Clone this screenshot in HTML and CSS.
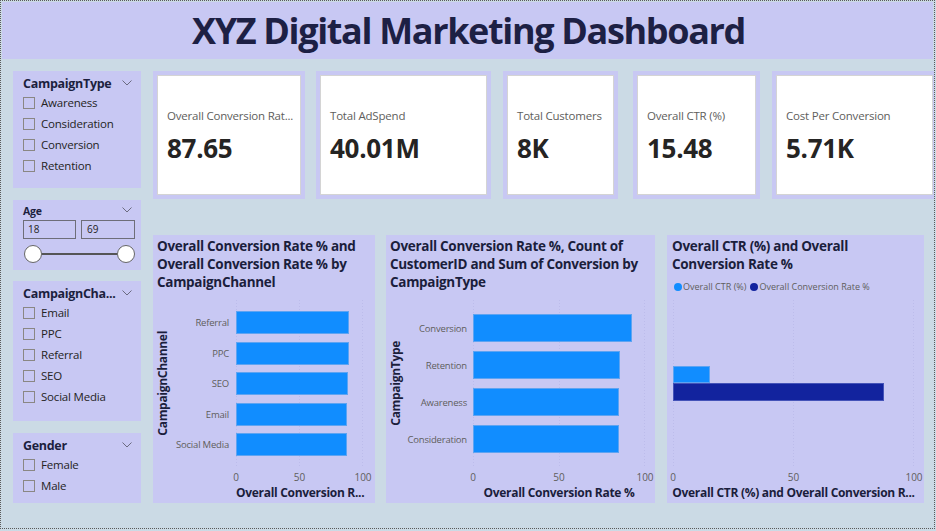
FILE: index.html
```html
<!DOCTYPE html>
<html lang="en">
<head>
<meta charset="utf-8">
<title>XYZ Digital Marketing Dashboard</title>
<link rel="stylesheet" href="styles.css">
</head>
<body>
<div class="frame">
  <header class="banner"><h1>XYZ Digital Marketing Dashboard</h1></header>
  <main class="main">
    <aside class="filters">
      <section class="slicer s-type">
        <div class="slicer-head"><span>CampaignType</span><svg class="chev" width="10" height="6" viewBox="0 0 10 6"><polyline points="0.5,0.5 5,5 9.5,0.5" fill="none" stroke="#6b6b80" stroke-width="1"/></svg></div>
        <ul class="opts">
          <li><span class="box"></span>Awareness</li>
          <li><span class="box"></span>Consideration</li>
          <li><span class="box"></span>Conversion</li>
          <li><span class="box"></span>Retention</li>
        </ul>
      </section>
      <section class="slicer s-age">
        <div class="slicer-head small"><span>Age</span><svg class="chev" width="10" height="6" viewBox="0 0 10 6"><polyline points="0.5,0.5 5,5 9.5,0.5" fill="none" stroke="#6b6b80" stroke-width="1"/></svg></div>
        <div class="range-inputs"><span class="num n1">18</span><span class="num n2">69</span></div>
        <div class="slider"><span class="knob"></span><span class="rail"></span><span class="knob"></span></div>
      </section>
      <section class="slicer s-channel">
        <div class="slicer-head"><span>CampaignCha...</span><svg class="chev" width="10" height="6" viewBox="0 0 10 6"><polyline points="0.5,0.5 5,5 9.5,0.5" fill="none" stroke="#6b6b80" stroke-width="1"/></svg></div>
        <ul class="opts">
          <li><span class="box"></span>Email</li>
          <li><span class="box"></span>PPC</li>
          <li><span class="box"></span>Referral</li>
          <li><span class="box"></span>SEO</li>
          <li><span class="box"></span>Social Media</li>
        </ul>
      </section>
      <section class="slicer s-gender">
        <div class="slicer-head"><span>Gender</span><svg class="chev" width="10" height="6" viewBox="0 0 10 6"><polyline points="0.5,0.5 5,5 9.5,0.5" fill="none" stroke="#6b6b80" stroke-width="1"/></svg></div>
        <ul class="opts">
          <li><span class="box"></span>Female</li>
          <li><span class="box"></span>Male</li>
        </ul>
      </section>
    </aside>

    <div class="content">
      <div class="kpis">
        <div class="kpi k1"><div class="kpi-inner"><div class="kpi-label">Overall Conversion Rat...</div><div class="kpi-value">87.65</div></div></div>
        <div class="kpi k2"><div class="kpi-inner"><div class="kpi-label">Total AdSpend</div><div class="kpi-value">40.01M</div></div></div>
        <div class="kpi k3"><div class="kpi-inner"><div class="kpi-label">Total Customers</div><div class="kpi-value">8K</div></div></div>
        <div class="kpi k4"><div class="kpi-inner"><div class="kpi-label">Overall CTR (%)</div><div class="kpi-value">15.48</div></div></div>
        <div class="kpi k5"><div class="kpi-inner"><div class="kpi-label">Cost Per Conversion</div><div class="kpi-value">5.71K</div></div></div>
      </div>

      <div class="charts">
        <section class="chart c1">
          <div class="chart-head"><h2>Overall Conversion Rate % and<br>Overall Conversion Rate % by<br>CampaignChannel</h2></div>
          <div class="chart-body">
            <div class="ytitle"><span>CampaignChannel</span></div>
            <div class="cats">
              <div class="cat">Referral</div>
              <div class="cat">PPC</div>
              <div class="cat">SEO</div>
              <div class="cat">Email</div>
              <div class="cat">Social Media</div>
            </div>
            <div class="plot">
              <div class="bar" style="width:89%"></div>
              <div class="bar" style="width:89%"></div>
              <div class="bar" style="width:88.2%"></div>
              <div class="bar" style="width:87.5%"></div>
              <div class="bar" style="width:87.3%"></div>
            </div>
          </div>
          <div class="xaxis"><span class="tick"><span>0</span></span><span class="tick"><span>50</span></span><span class="tick"><span>100</span></span></div>
          <div class="xtitle">Overall Conversion R...</div>
        </section>

        <section class="chart c2">
          <div class="chart-head"><h2>Overall Conversion Rate %, Count of<br>CustomerID and Sum of Conversion by<br>CampaignType</h2></div>
          <div class="chart-body">
            <div class="ytitle"><span>CampaignType</span></div>
            <div class="cats">
              <div class="cat">Conversion</div>
              <div class="cat">Retention</div>
              <div class="cat">Awareness</div>
              <div class="cat">Consideration</div>
            </div>
            <div class="plot">
              <div class="bar" style="width:92.5%"></div>
              <div class="bar" style="width:85.2%"></div>
              <div class="bar" style="width:85%"></div>
              <div class="bar" style="width:85%"></div>
            </div>
          </div>
          <div class="xaxis"><span class="tick"><span>0</span></span><span class="tick"><span>50</span></span><span class="tick"><span>100</span></span></div>
          <div class="xtitle">Overall Conversion Rate %</div>
        </section>

        <section class="chart c3">
          <div class="chart-head">
            <h2>Overall CTR (%) and Overall<br>Conversion Rate %</h2>
            <div class="legend">
              <span class="lg"><span class="dot light"></span>Overall CTR (%)</span>
              <span class="lg"><span class="dot dark"></span>Overall Conversion Rate %</span>
            </div>
          </div>
          <div class="chart-body">
            <div class="plot">
              <div class="bar b-ctr" style="width:15.48%"></div>
              <div class="bar b-conv navy" style="width:87.65%"></div>
            </div>
          </div>
          <div class="xaxis"><span class="tick"><span>0</span></span><span class="tick"><span>50</span></span><span class="tick"><span>100</span></span></div>
          <div class="xtitle">Overall CTR (%) and Overall Conversion R...</div>
        </section>
      </div>
    </div>
  </main>
</div>
</body>
</html>
```

FILE: styles.css
```css
* { box-sizing: border-box; margin: 0; padding: 0; }

body {
  width: 936px;
  height: 531px;
  overflow: hidden;
  background: #cbdae5;
  font-family: "Open Sans", "Noto Sans", sans-serif;
  color: #252423;
}

.frame {
  width: 935px;
  height: 529px;
  border: 1px dotted #5a5a5a;
  overflow: hidden;
}

.banner {
  margin: 1px 1px 0 1px;
  height: 57px;
  background: #c8c8f3;
  display: flex;
  align-items: center;
  justify-content: center;
}

.banner h1 {
  font-size: 36px;
  font-weight: 700;
  color: #1d2044;
  letter-spacing: -1.35px;
  line-height: 1;
  margin-left: 2px;
}

.main {
  display: flex;
  gap: 12px;
  padding: 12px 0 0 12px;
}

/* ---------- slicers ---------- */
.filters {
  width: 128px;
  flex: none;
  display: flex;
  flex-direction: column;
}

.slicer {
  background: #c8c8f3;
  padding: 4px 8px 0 10px;
}

.s-type { height: 117px; }
.s-age { height: 70px; margin-top: 12px; padding-right: 6px; }
.s-channel { height: 140px; margin-top: 11px; }
.s-gender { height: 70px; margin-top: 12px; }

.slicer-head {
  display: flex;
  justify-content: space-between;
  align-items: center;
  height: 17px;
  font-size: 12.5px;
  font-weight: 700;
  color: #1c1f3e;
  letter-spacing: -0.3px;
}

.slicer-head .chev { margin-right: 1px; margin-top: -2px; }

.slicer-head.small {
  height: 13px;
  font-size: 10.5px;
  letter-spacing: -0.2px;
}
.s-age .slicer-head .chev { margin-right: 3px; }

.opts { list-style: none; }

.opts li {
  height: 21px;
  display: flex;
  align-items: center;
  font-size: 11.5px;
  letter-spacing: -0.2px;
  color: #252423;
}

.box {
  width: 12px;
  height: 12px;
  border: 1px solid #8a8784;
  margin-right: 6px;
  flex: none;
}

.range-inputs {
  display: flex;
  gap: 5px;
  margin-top: 3px;
}

.num {
  height: 19px;
  border: 1px solid #6e6e78;
  font-size: 10px;
  line-height: 17px;
  padding-left: 4px;
  color: #252423;
}
.n1 { width: 53px; }
.n2 { width: 54px; padding-left: 5px; }

.slider {
  display: flex;
  align-items: center;
  margin-top: 6px;
  width: 112px;
  padding-left: 1px;
}

.knob {
  width: 18px;
  height: 18px;
  border-radius: 50%;
  background: #fff;
  border: 1.5px solid #666;
  flex: none;
}

.rail {
  flex: 1;
  height: 2px;
  background: #555;
}

/* ---------- KPI cards ---------- */
.content {
  flex: 1;
  display: flex;
  flex-direction: column;
}

.kpis {
  display: flex;
  height: 128px;
}

.kpi {
  border: 4px solid #c8c8f3;
  background: #fff;
  flex: none;
}
.k1 { width: 152px; }
.k2 { width: 175px; margin-left: 11px; }
.k3 { width: 115px; margin-left: 12px; }
.k4 { width: 127px; margin-left: 15px; }
.k5 { width: 165px; margin-left: 12px; }

.kpi-inner {
  height: 100%;
  border: 1px solid #d4d4d4;
  padding: 32px 0 0 9px;
  white-space: nowrap;
}

.kpi-label {
  font-size: 11.5px;
  line-height: 16px;
  color: #605e5c;
  letter-spacing: -0.2px;
}

.kpi-value {
  margin-top: 8px;
  font-size: 26px;
  line-height: 32px;
  font-weight: 700;
  color: #252423;
  letter-spacing: -0.3px;
}

/* ---------- charts ---------- */
.charts {
  display: flex;
  margin-top: 36px;
}

.chart {
  background: #c8c8f3;
  height: 268px;
  flex: none;
  display: flex;
  flex-direction: column;
}
.c1 { width: 222px; }
.c2 { width: 269px; margin-left: 11px; }
.c3 { width: 257px; margin-left: 12px; }

.chart-head {
  height: 65px;
  padding: 2px 0 0 4px;
}
.c3 .chart-head { padding-left: 5px; }

.chart-head h2 {
  font-size: 13.5px;
  line-height: 18px;
  font-weight: 700;
  color: #1b1e3c;
  white-space: nowrap;
  letter-spacing: -0.3px;
}

.legend {
  display: flex;
  gap: 4px;
  margin-top: 8px;
  font-size: 9px;
  line-height: 12px;
  color: #605e5c;
  white-space: nowrap;
  margin-left: 2px;
}

.lg { display: flex; align-items: center; gap: 1px; }

.dot {
  width: 8px;
  height: 8px;
  border-radius: 50%;
  display: inline-block;
}
.dot.light { background: #118dff; }
.dot.dark { background: #12239e; }

.chart-body {
  height: 167px;
  display: flex;
}

.ytitle {
  width: 18px;
  flex: none;
  display: flex;
  align-items: center;
  justify-content: center;
}

.ytitle span {
  writing-mode: vertical-rl;
  transform: rotate(180deg);
  font-size: 12px;
  font-weight: 700;
  color: #1b1e3c;
  white-space: nowrap;
  letter-spacing: -0.3px;
}

.cats, .plot {
  display: flex;
  flex-direction: column;
  justify-content: center;
  flex: none;
}

.cat {
  display: flex;
  align-items: center;
  justify-content: flex-end;
  font-size: 9.5px;
  color: #605e5c;
  white-space: nowrap;
  letter-spacing: -0.2px;
}

.plot {
  background-image:
    repeating-linear-gradient(to bottom, #bcbceb 0 1px, transparent 1px 3px),
    repeating-linear-gradient(to bottom, #bcbceb 0 1px, transparent 1px 3px),
    repeating-linear-gradient(to bottom, #bcbceb 0 1px, transparent 1px 3px);
  background-size: 1px 100%;
  background-repeat: no-repeat;
  background-position: 0 0, 50% 0, 100% 0;
}

.bar {
  flex: none;
  background: #118dff;
  box-shadow: inset 0 0 0 1px #5ea4f2;
}
.bar.navy {
  background: #12239e;
  box-shadow: inset 0 0 0 1px #4453b8;
}

/* chart 1 geometry */
.c1 .cats { width: 58px; gap: 7.5px; }
.c1 .cat { height: 23px; }
.c1 .plot { width: 127px; margin-left: 7px; gap: 7.5px; }
.c1 .bar { height: 23px; }

/* chart 2 geometry */
.c2 .cats { width: 63px; gap: 9px; }
.c2 .cat { height: 28px; }
.c2 .plot { width: 172px; margin-left: 6px; gap: 9px; }
.c2 .bar { height: 28px; }

/* chart 3 geometry */
.c3 .plot { width: 241px; margin-left: 6px; }
.c3 .b-ctr { height: 17px; }
.c3 .b-conv { height: 18px; }

.xaxis {
  display: flex;
  justify-content: space-between;
  height: 16px;
  margin-top: 2px;
  font-size: 10px;
  line-height: 16px;
  color: #605e5c;
}

.tick {
  width: 0;
  display: flex;
  justify-content: center;
  white-space: nowrap;
}

.xtitle {
  height: 16px;
  font-size: 12px;
  line-height: 16px;
  font-weight: 700;
  color: #1b1e3c;
  text-align: center;
  white-space: nowrap;
  letter-spacing: -0.3px;
}

.c1 .xaxis, .c1 .xtitle { margin-left: 83px; width: 127px; }
.c2 .xaxis, .c2 .xtitle { margin-left: 87px; width: 172px; }
.c3 .xaxis { margin-left: 6px; width: 241px; }
.c3 .xtitle { margin-left: -10px; width: 273px; }
```
